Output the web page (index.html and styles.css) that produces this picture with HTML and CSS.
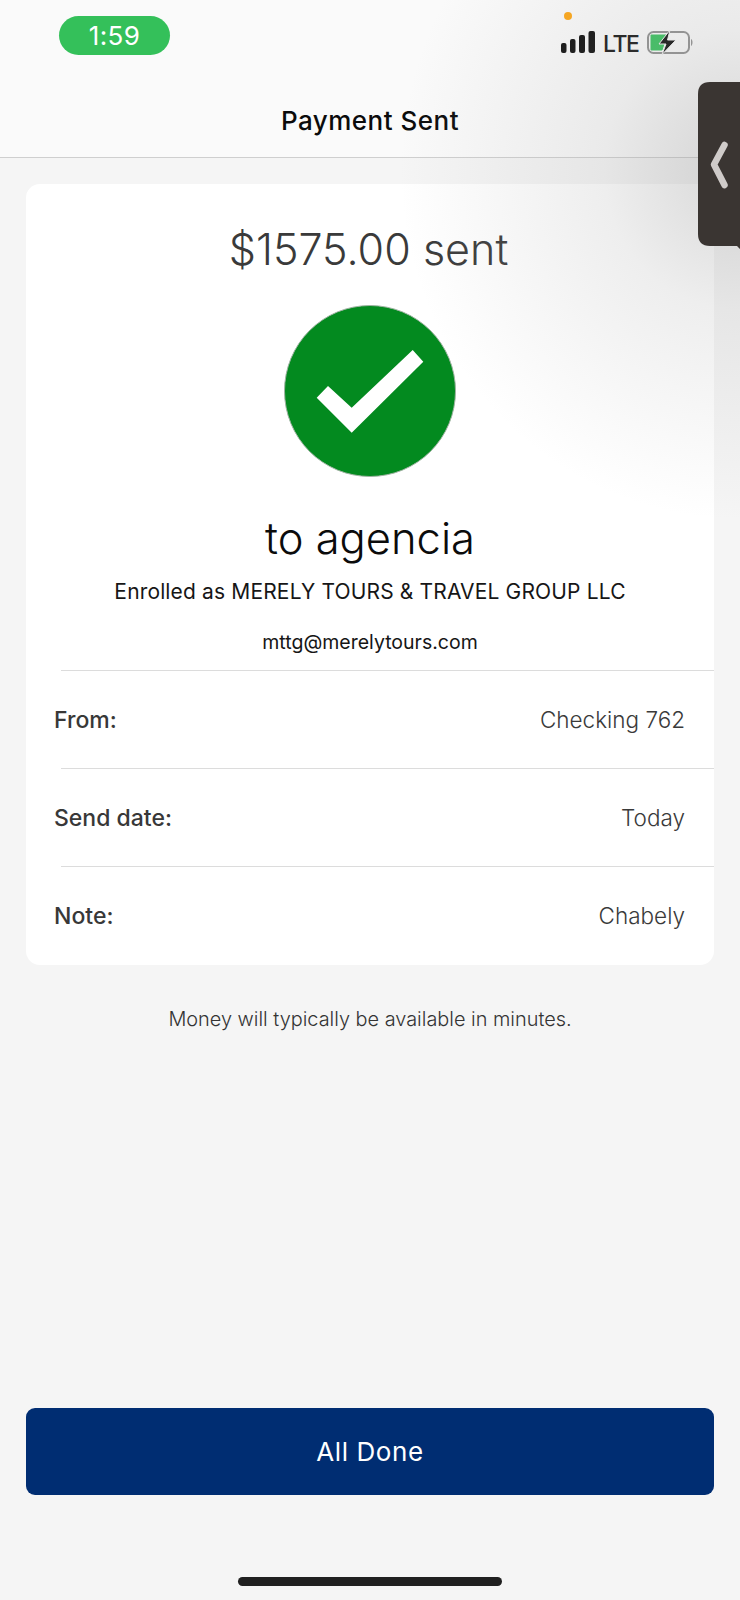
FILE: index.html
```html
<!DOCTYPE html>
<html lang="en">
<head>
<meta charset="utf-8">
<title>Payment Sent</title>
<link rel="stylesheet" href="styles.css">
</head>
<body>
<div class="screen">
  <header class="top">
    <div class="status">
      <div class="time">1:59</div>
      <div class="indicators">
        <svg class="signal" width="34" height="22" viewBox="0 0 34 22"><rect x="0" y="12" width="5.500" height="10" rx="2"/><rect x="9" y="8" width="5.500" height="14" rx="2"/><rect x="18" y="4" width="6" height="18" rx="2"/><rect x="27.500" y="0" width="6.500" height="22" rx="2"/></svg>
        <span class="lte">LTE</span>
        <svg class="battery" width="48" height="26" viewBox="0 0 48 26"><rect x="2" y="3" width="41" height="21" rx="5.500" fill="none" stroke="#8e8e8e" stroke-width="2"/><path d="M5 6h16l-5 15H5z" fill="#34c05a" stroke="#34c05a" stroke-linejoin="round"/><path d="M45 10c2 .8 2 6 0 7z" fill="#8e8e8e"/><path d="M24 1 13 15h7l-4 10.500L30 11h-8.500z" fill="#0a0a0a" stroke="#f4f4f4" stroke-width="1"/></svg>
      </div>
    </div>
    <h1 class="nav-title">Payment Sent</h1>
  </header>
  <main class="content">
    <section class="card">
      <div class="amount">$1575.00 sent</div>
      <svg class="check" width="172" height="172" viewBox="0 0 172 172"><circle cx="86" cy="86" r="85.500" fill="#038a1f" stroke="#9fb3a2"/><path d="M32.700 92.700 44 81 67.700 102.700 128.700 45 139.300 56.700 67.700 127.700z" fill="#fff"/></svg>
      <div class="recipient">to agencia</div>
      <div class="enrolled">Enrolled as MERELY TOURS &amp; TRAVEL GROUP LLC</div>
      <div class="email">mttg@merelytours.com</div>
      <div class="row"><span class="label">From:</span><span class="value">Checking 762</span></div>
      <div class="row"><span class="label">Send date:</span><span class="value">Today</span></div>
      <div class="row"><span class="label">Note:</span><span class="value">Chabely</span></div>
    </section>
    <p class="notice">Money will typically be available in minutes.</p>
    <button class="done" type="button">All Done</button>
  </main>
  <div class="home-bar"></div>
  <div class="glow"></div>
  <span class="mic-dot"></span>
  <svg class="tab" width="42" height="170" viewBox="0 0 42 170"><path d="M42 0v3H12Q0 3 0 15v140q0 12 12 12h27l3 3z" fill="#3a3532"/><path d="M26.500 66 16 85.500 26.500 106" fill="none" stroke="#cfcbc9" stroke-width="6.500" stroke-linecap="round" stroke-linejoin="round"/></svg>
</div>
</body>
</html>
```
FILE: styles.css
```css
* { box-sizing: border-box; }
html, body { margin: 0; padding: 0; }
body { background: #f5f5f5; font-family: Inter, "Open Sans", "Liberation Sans", sans-serif; }
.screen { position: relative; width: 740px; height: 1600px; overflow: hidden; display: flex; flex-direction: column; background: #f5f5f5; }
.top { height: 158px; background: #fafafa; border-bottom: 1px solid #cfcfcf; }
.status { height: 105px; display: flex; justify-content: space-between; align-items: flex-start; padding: 16px 46px 0 59px; }
.time { width: 111px; height: 39px; border-radius: 20px; background: #34c05a; color: #fff; font-size: 26px; line-height: 39px; text-align: center; letter-spacing: 0.4px; }
.indicators { display: flex; align-items: flex-start; padding-top: 15px; }
.signal { fill: #0a0a0a; }
.lte { width: 33px; margin-left: 8px; font-size: 23px; line-height: 22px; font-weight: 500; color: #111; padding-top: 2px; letter-spacing: -1.4px; }
.battery { margin-left: 10px; margin-top: -2px; }
.nav-title { margin: 0; font-size: 26px; line-height: 32px; font-weight: 500; letter-spacing: 0.5px; color: #0b0b0b; text-align: center; }
.content { flex: 1; display: flex; flex-direction: column; padding: 26px 26px 0; }
.card { background: #fff; border-radius: 14px; height: 781px; display: flex; flex-direction: column; align-items: center; }
.amount { margin-top: 36px; margin-right: 3px; font-size: 43px; line-height: 58px; font-weight: 300; letter-spacing: 0.03px; color: #3a3a3a; }
.check { margin-top: 27px; display: block; }
.recipient { margin-top: 31px; font-size: 43.500px; line-height: 60px; font-weight: 300; color: #0b0b0b; }
.enrolled { margin-top: 9px; font-size: 21px; line-height: 30px; letter-spacing: 0.15px; color: #161616; }
.email { margin-top: 20px; font-size: 19.500px; line-height: 30px; color: #161616; }
.row { align-self: stretch; margin-left: 35px; height: 98px; border-top: 1px solid #dcdcdc; display: flex; justify-content: space-between; align-items: center; }
.email + .row { margin-top: 13px; }
.label { margin-left: -7px; font-size: 23px; font-weight: 500; color: #383838; }
.value { margin-right: 29px; font-size: 22.500px; font-weight: 300; color: #3a3a3a; }
.notice { margin: 39px 0 0; font-size: 19.900px; line-height: 30px; font-weight: 300; color: #333; text-align: center; }
.done { margin-top: auto; margin-bottom: 105px; height: 87px; width: 100%; border: 0; border-radius: 9px; background: #002d72; color: #fff; font: 400 26px/1 Inter, "Open Sans", sans-serif; letter-spacing: 0.6px; }
.home-bar { position: absolute; left: 238px; top: 1577px; width: 264px; height: 9px; border-radius: 5px; background: #202020; }
.glow { position: absolute; left: 300px; top: 0; width: 440px; height: 560px; pointer-events: none; background: radial-gradient(ellipse 340px 350px at 100% 170px, rgba(150,150,150,.38) 0%, rgba(170,170,170,.2) 40%, rgba(200,200,200,0) 100%); }
.mic-dot { position: absolute; left: 564px; top: 12px; width: 8px; height: 8px; border-radius: 50%; background: #f5a623; }
.tab { position: absolute; left: 698px; top: 79px; }
```
